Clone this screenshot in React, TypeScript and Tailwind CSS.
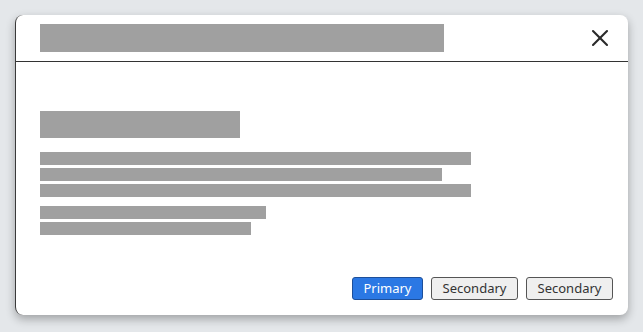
import { X } from 'lucide-react';

function Bar({ w, h = 13 }: { w: number; h?: number }) {
    return <div className="bg-[#a0a0a0]" style={{ width: w, height: h }} />;
}

export default function App() {
    return (
        <div className="w-[643px] h-[332px] bg-[#e4e7ea] pt-[15px] pl-[15px]" style={{ fontFamily: '"Noto Sans", "Open Sans", sans-serif' }}>
            <div className="w-[613px] h-[300px] bg-white rounded-lg border-l border-[#3a3a3a] shadow-[0_4px_10px_rgba(0,0,0,0.3)] flex flex-col overflow-hidden">
                <div className="h-[47px] border-b border-[#333] flex items-start justify-between pl-6 pr-[14px] pt-[9px] shrink-0">
                    <div className="w-[404px] h-[28px] bg-[#a0a0a0]" />
                    <button className="text-[#2a2a2a]">
                        <X size={28} strokeWidth={1.8} />
                    </button>
                </div>
                <div className="flex-1 pl-6 pt-[49px]">
                    <div className="w-[200px] h-[27px] bg-[#a0a0a0]" />
                    <div className="mt-[14px] flex flex-col gap-[3px]">
                        <Bar w={431} />
                        <Bar w={402} />
                        <Bar w={431} />
                    </div>
                    <div className="mt-[9px] flex flex-col gap-[3px]">
                        <Bar w={226} />
                        <Bar w={211} />
                    </div>
                </div>
                <div className="flex justify-end gap-[8px] pr-[15px] pb-[15px]">
                    <button className="w-[71px] h-[23px] rounded-[3px] border border-[#1d4f9a] bg-[#2b78e4] text-white text-[13px] leading-none">Primary</button>
                    <button className="w-[87px] h-[23px] rounded-[3px] border border-[#555] bg-[#efefef] text-[#333] text-[13px] leading-none">Secondary</button>
                    <button className="w-[87px] h-[23px] rounded-[3px] border border-[#555] bg-[#efefef] text-[#333] text-[13px] leading-none">Secondary</button>
                </div>
            </div>
        </div>
    );
}
